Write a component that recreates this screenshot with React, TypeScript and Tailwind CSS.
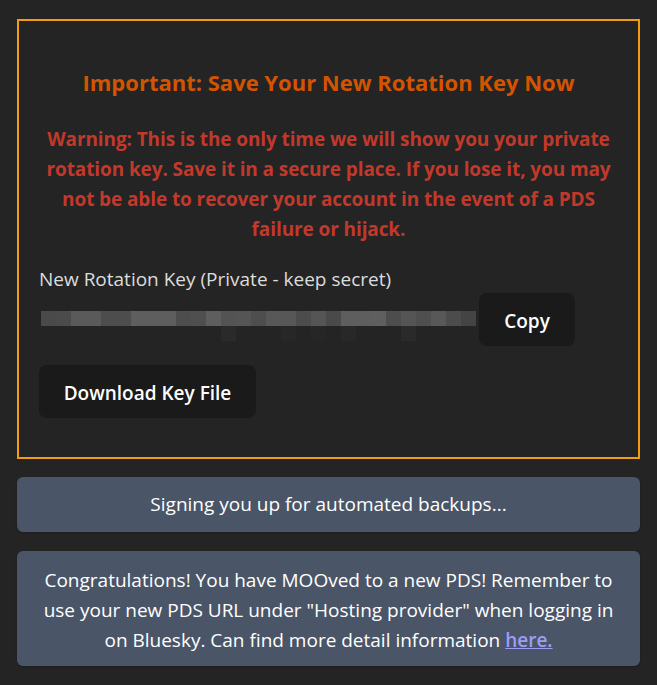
import { useState } from 'react';

// pixelated preview of the secret key (it is blurred in the UI)
const KEY_TOP = [
  '#4a4a4a', '#4b4b4b', '#5a5a5a', '#5a5a5a', '#4d4d4d', '#4d4d4d', '#5e5e5e', '#5e5e5e',
  '#5e5e5e', '#4d4d4d', '#4f4f4f', '#5e5e5e', '#535353', '#555555', '#4e4e4e', '#585858',
  '#575757', '#4c4c4c', '#555555', '#4a4a4a', '#5e5e5e', '#5e5e5e', '#5f5f5f', '#4d4d4d',
  '#555555', '#4f4f4f', '#585858', '#4c4c4c', '#444444',
];
const KEY_BOTTOM: Record<number, string> = { 12: '#2a2a2a', 16: '#272727', 18: '#262626', 20: '#282828', 24: '#2a2a2a' };

function BlurredKey() {
  return (
    <svg width="435" height="30" viewBox="0 0 435 30" className="shrink-0">
      {KEY_TOP.map((c, i) => (
        <rect key={i} x={i * 15} y={0} width={15} height={15} fill={c} />
      ))}
      {Object.entries(KEY_BOTTOM).map(([i, c]) => (
        <rect key={`b-${i}`} x={Number(i) * 15} y={15} width={15} height={15} fill={c} />
      ))}
    </svg>
  );
}

export default function App() {
  const [copied, setCopied] = useState(false);

  return (
    <div
      className="min-h-[685px] bg-[#242424] px-[17px] pt-[19px] pb-5 text-[19px] text-[#dedede]"
      style={{ fontFamily: '"Open Sans", "Noto Sans", Arial, sans-serif' }}
    >
      <div className="border-2 border-[#f39c12] px-5 pt-[47px] pb-[39px]">
        <h2 className="text-center text-[22px] font-bold leading-7 text-[#d35400]">
          Important: Save Your New Rotation Key Now
        </h2>
        <p className="mt-[28px] px-1 text-center text-[19px] font-bold leading-[30px] tracking-[-0.1px] text-[#c0392b]">
          Warning: This is the only time we will show you your private
          <br />
          rotation key. Save it in a secure place. If you lose it, you may
          <br />
          not be able to recover your account in the event of a PDS
          <br />
          failure or hijack.
        </p>
        <div className="mt-[22px] leading-[26px] text-[#dcdcdc]">
          New Rotation Key (Private - keep secret)
        </div>
        <div className="mt-px flex items-start gap-[3px]">
          <div className="mt-[18px] ml-[2px]">
            <BlurredKey />
          </div>
          <button
            onClick={() => setCopied(true)}
            className="h-[53px] w-[96px] rounded-lg bg-[#1a1a1a] pt-[3px] text-[19px] font-semibold text-white"
          >
            {copied ? 'Copied' : 'Copy'}
          </button>
        </div>
        <button className="mt-[19px] h-[53px] w-[217px] rounded-lg bg-[#1a1a1a] pt-[3px] text-[19px] font-semibold text-white">
          Download Key File
        </button>
      </div>

      <div className="mt-[18px] rounded-md bg-[#4a5568] py-[14px] text-center leading-[27px] text-white shadow-sm">
        Signing you up for automated backups...
      </div>

      <div className="mt-[19px] rounded-md bg-[#4a5568] px-[20px] pt-[14px] pb-[11px] text-center leading-[30px] text-white shadow-sm">
        Congratulations! You have MOOved to a new PDS! Remember to
        <br />
        use your new PDS URL under "Hosting provider" when logging in
        <br />
        on Bluesky. Can find more detail information{' '}
        <a href="#" className="font-semibold text-[#9d9df5] underline">
          here.
        </a>
      </div>
    </div>
  );
}
